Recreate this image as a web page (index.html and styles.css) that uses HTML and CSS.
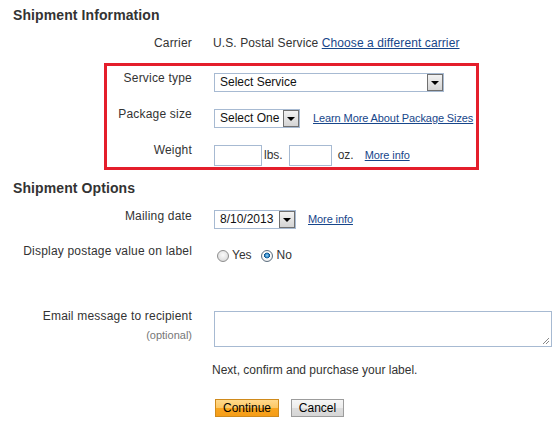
FILE: index.html
```html
<!DOCTYPE html>
<html>
<head>
<meta charset="utf-8">
<link rel="stylesheet" href="styles.css">
</head>
<body>
<div class="page">
  <h2 class="heading">Shipment Information</h2>
  <div class="row row-carrier">
    <div class="label">Carrier</div>
    <div class="value text-value">U.S. Postal Service&nbsp;<a class="link" href="#">Choose a different carrier</a></div>
  </div>

  <div class="highlight">
    <div class="row">
      <div class="label">Service type</div>
      <div class="value">
        <div class="select select-service"><span class="sel-text">Select Service</span><span class="sel-btn"><span class="tri"></span></span></div>
      </div>
    </div>
    <div class="row row-gap">
      <div class="label">Package size</div>
      <div class="value">
        <div class="select select-package"><span class="sel-text">Select One</span><span class="sel-btn"><span class="tri"></span></span></div>
        <a class="link small-link link-learn" href="#">Learn More About Package Sizes</a>
      </div>
    </div>
    <div class="row row-gap">
      <div class="label">Weight</div>
      <div class="value">
        <span class="input input-lbs"></span>
        <span class="unit unit-lbs">lbs.</span>
        <span class="input input-oz"></span>
        <span class="unit unit-oz">oz.</span>
        <a class="link small-link link-weight" href="#">More info</a>
      </div>
    </div>
  </div>

  <h2 class="heading heading-options">Shipment Options</h2>
  <div class="row row-mailing">
    <div class="label wide">Mailing date</div>
    <div class="value value-mailing">
      <div class="select select-date"><span class="sel-text">8/10/2013</span><span class="sel-btn"><span class="tri"></span></span></div>
      <a class="link small-link link-date" href="#">More info</a>
    </div>
  </div>
  <div class="row row-gap row-display">
    <div class="label wide">Display postage value on label</div>
    <div class="value value-radio">
      <span class="radio radio-yes"></span><span class="radio-label">Yes</span>
      <span class="radio radio-no checked"></span><span class="radio-label">No</span>
    </div>
  </div>
  <div class="row row-email">
    <div class="label wide">Email message to recipient<div class="optional">(optional)</div></div>
    <div class="value">
      <div class="textarea"><svg class="grip" width="9" height="9" viewBox="0 0 9 9"><path d="M8 2 L2 8 M8 5 L5 8" stroke="#888" stroke-width="1" fill="none"/></svg></div>
    </div>
  </div>
  <p class="next">Next, confirm and purchase your label.</p>
  <div class="buttons">
    <button class="btn btn-continue">Continue</button>
    <button class="btn btn-cancel">Cancel</button>
  </div>
</div>
</body>
</html>
```
FILE: styles.css
```css
body {
  margin: 0;
  font-family: "Liberation Sans", Arial, sans-serif;
  font-size: 12px;
  color: #333;
  background: #fff;
}
.page {
  padding-top: 7px;
}
.heading {
  margin: 0 0 0 13px;
  font-size: 14px;
  line-height: 17px;
  font-weight: bold;
  color: #333;
  letter-spacing: 0.1px;
}
.heading-options {
  margin-top: 10px;
}
.row {
  display: flex;
  gap: 21px;
  line-height: 15px;
}
.row-carrier {
  margin-top: 12px;
}
.row-gap {
  margin-top: 15px;
}
.label {
  width: 192px;
  flex: none;
  text-align: right;
  white-space: nowrap;
  letter-spacing: 0.2px;
}
.highlight .label {
  width: 85px;
}
.value {
  display: flex;
  align-items: center;
  margin-top: 2px;
  white-space: nowrap;
  flex: none;
}
.text-value {
  margin-top: 0;
  letter-spacing: 0.1px;
}
.link {
  color: #17468a;
  text-decoration: underline;
}
.small-link {
  font-size: 11px;
  flex: none;
  letter-spacing: -0.1px;
}
.highlight {
  box-sizing: border-box;
  width: 375px;
  margin: 12px 0 0 104px;
  border: 3px solid #e41e2b;
  padding: 5px 0 1px 0;
}
.select {
  box-sizing: border-box;
  display: flex;
  align-items: stretch;
  height: 19px;
  margin-left: 1px;
  border: 1px solid #a7bad2;
  background: #fff;
  flex: none;
}
.sel-text {
  flex: 1;
  padding-left: 5px;
  color: #111;
  line-height: 17px;
  white-space: nowrap;
}
.sel-btn {
  box-sizing: border-box;
  width: 16px;
  flex: none;
  border: 1px solid #707070;
  background: linear-gradient(#f2f2f2, #d4d4d4);
  display: flex;
  align-items: center;
  justify-content: center;
}
.tri {
  width: 0;
  height: 0;
  border-left: 4px solid transparent;
  border-right: 4px solid transparent;
  border-top: 4px solid #000;
}
.select-service {
  width: 230px;
}
.select-package {
  width: 86px;
}
.select-date {
  width: 82px;
}
.link-learn {
  margin-left: 13px;
}
.input {
  box-sizing: border-box;
  display: block;
  height: 21px;
  margin-left: 1px;
  border: 1px solid #a7bad2;
  background: #fff;
  flex: none;
}
.input-lbs {
  width: 48px;
}
.input-oz {
  width: 43px;
  margin-left: 6px;
}
.unit-lbs {
  margin-left: 2px;
}
.unit-oz {
  margin-left: 6px;
}
.link-weight {
  margin-left: 11px;
}
.row-mailing {
  margin-top: 12px;
}
.value-mailing {
  margin-top: 1px;
}
.link-date {
  margin-left: 12px;
}
.value-radio {
  margin-top: 4px;
}
.radio {
  box-sizing: border-box;
  width: 12px;
  height: 12px;
  border-radius: 50%;
  border: 1px solid #8e8e8e;
  background: radial-gradient(circle at 50% 40%, #fbfbfb 0%, #e6e6e6 55%, #cfcfcf 100%);
  flex: none;
}
.radio-yes {
  margin-left: 4px;
  margin-right: 3px;
}
.radio-no {
  margin-left: 9px;
  margin-right: 4px;
}
.radio.checked {
  border-color: #5d6f80;
  background: radial-gradient(circle at 50% 45%, #9fd6f7 0%, #2d86c6 25%, #10477a 38%, #ffffff 42%, #eeeeee 70%, #cfcfcf 100%);
}
.row-email {
  margin-top: 46px;
}
.optional {
  margin-top: 5px;
  font-size: 11px;
  line-height: 13px;
  color: #777;
  letter-spacing: 0;
}
.textarea {
  position: relative;
  box-sizing: border-box;
  width: 338px;
  height: 36px;
  margin-left: 1px;
  border: 1px solid #a7bad2;
  background: #fff;
}
.grip {
  position: absolute;
  right: 1px;
  bottom: 1px;
}
.next {
  margin: 16px 0 0 212px;
  line-height: 15px;
}
.buttons {
  display: flex;
  gap: 12px;
  margin: 21px 0 0 215px;
}
.btn {
  box-sizing: border-box;
  height: 18px;
  padding: 0;
  font-family: "Liberation Sans", Arial, sans-serif;
  font-size: 12px;
  line-height: 16px;
  color: #000;
  cursor: pointer;
}
.btn-continue {
  width: 64px;
  border: 1px solid #cf8a1c;
  background: linear-gradient(#ffd98c 0%, #fcc764 50%, #f8a51f 52%, #f59d18 100%);
}
.btn-cancel {
  width: 53px;
  border: 1px solid #9c9c9c;
  background: linear-gradient(#f6f6f6 0%, #ececec 50%, #dddddd 52%, #d6d6d6 100%);
}
```
